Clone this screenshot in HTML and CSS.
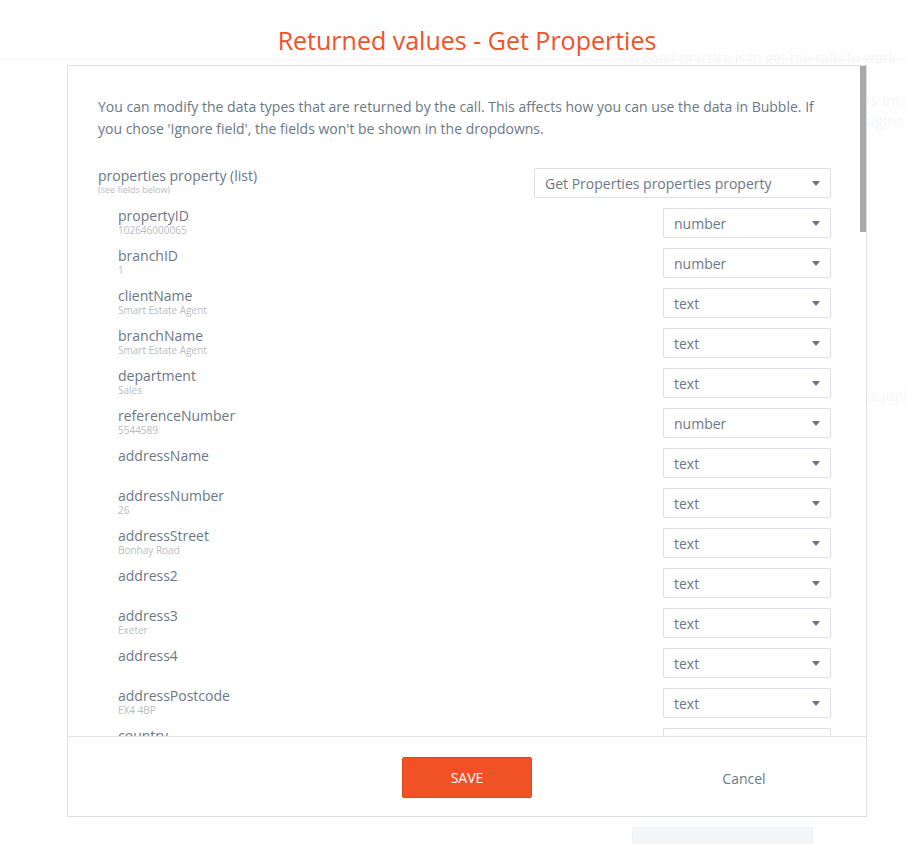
FILE: index.html
```html
<!DOCTYPE html>
<html>
<head>
<meta charset="utf-8">
<link rel="stylesheet" href="styles.css">
</head>
<body>
<div class="backdrop">
  <div class="bg-line bg-line-1"></div>
  <div class="bg-text bg-t1">A good practice is to get the calls to work</div>
  <div class="bg-text bg-t2">ns inte</div>
  <div class="bg-text bg-t3">lugins</div>
  <div class="bg-text bg-t4">es.jupi</div>
  <div class="bg-btn"></div>
</div>

<div class="popup">
  <h1 class="title">Returned values - Get Properties</h1>
  <div class="modal">
    <div class="scroll">
      <p class="intro">You can modify the data types that are returned by the call. This affects how you can use the data in Bubble. If you chose 'Ignore field', the fields won't be shown in the dropdowns.</p>

      <div class="row">
        <div class="lbl"><div class="name">properties property (list)</div><div class="sample small">(see fields below)</div></div>
        <div class="select wide"><span>Get Properties properties property</span><i class="caret"></i></div>
      </div>

      <div class="row child"><div class="lbl"><div class="name">propertyID</div><div class="sample">102646000065</div></div><div class="select"><span>number</span><i class="caret"></i></div></div>
      <div class="row child"><div class="lbl"><div class="name">branchID</div><div class="sample">1</div></div><div class="select"><span>number</span><i class="caret"></i></div></div>
      <div class="row child"><div class="lbl"><div class="name">clientName</div><div class="sample">Smart Estate Agent</div></div><div class="select"><span>text</span><i class="caret"></i></div></div>
      <div class="row child"><div class="lbl"><div class="name">branchName</div><div class="sample">Smart Estate Agent</div></div><div class="select"><span>text</span><i class="caret"></i></div></div>
      <div class="row child"><div class="lbl"><div class="name">department</div><div class="sample">Sales</div></div><div class="select"><span>text</span><i class="caret"></i></div></div>
      <div class="row child"><div class="lbl"><div class="name">referenceNumber</div><div class="sample">5544589</div></div><div class="select"><span>number</span><i class="caret"></i></div></div>
      <div class="row child"><div class="lbl"><div class="name">addressName</div></div><div class="select"><span>text</span><i class="caret"></i></div></div>
      <div class="row child"><div class="lbl"><div class="name">addressNumber</div><div class="sample">26</div></div><div class="select"><span>text</span><i class="caret"></i></div></div>
      <div class="row child"><div class="lbl"><div class="name">addressStreet</div><div class="sample">Bonhay Road</div></div><div class="select"><span>text</span><i class="caret"></i></div></div>
      <div class="row child"><div class="lbl"><div class="name">address2</div></div><div class="select"><span>text</span><i class="caret"></i></div></div>
      <div class="row child"><div class="lbl"><div class="name">address3</div><div class="sample">Exeter</div></div><div class="select"><span>text</span><i class="caret"></i></div></div>
      <div class="row child"><div class="lbl"><div class="name">address4</div></div><div class="select"><span>text</span><i class="caret"></i></div></div>
      <div class="row child"><div class="lbl"><div class="name">addressPostcode</div><div class="sample">EX4 4BP</div></div><div class="select"><span>text</span><i class="caret"></i></div></div>
      <div class="row child"><div class="lbl"><div class="name">country</div></div><div class="select"><span>text</span><i class="caret"></i></div></div>
      <div class="scrollthumb"></div>
    </div>
    <div class="footer">
      <div></div>
      <button class="save">SAVE</button>
      <div class="cancel">Cancel</div>
    </div>
  </div>
</div>
</body>
</html>
```

FILE: styles.css
```css
html, body {
  margin: 0;
  padding: 0;
  background: #ffffff;
  font-family: "Open Sans", "Liberation Sans", sans-serif;
  color: #6b7785;
}
body {
  width: 906px;
  height: 844px;
  overflow: hidden;
  position: relative;
}

/* faded page behind the popup */
.backdrop {
  position: absolute;
  inset: 0;
  background: #fefefe;
}
.bg-line {
  position: absolute;
  left: 0;
  right: 0;
  height: 1px;
  background: #f6f6f6;
}
.bg-line-1 { top: 59px; }
.bg-text {
  position: absolute;
  font-size: 14px;
  color: #f6f7f8;
  white-space: nowrap;
}
.bg-t1 { left: 630px; top: 48px; }
.bg-t2 { left: 862px; top: 90px; font-size: 15px; }
.bg-t3 { left: 862px; top: 110px; font-size: 15px; color: #f3f6fa; }
.bg-t4 { left: 862px; top: 385px; font-size: 15px; }
.bg-btn {
  position: absolute;
  left: 632px;
  top: 827px;
  width: 179px;
  height: 30px;
  background: #f4f5f7;
  border: 1px solid #eef0f2;
  border-radius: 2px;
}

/* popup */
.popup {
  position: absolute;
  left: 67px;
  top: 0;
  width: 800px;
}
.title {
  margin: 0;
  height: 65px;
  padding-top: 23px;
  box-sizing: border-box;
  font-weight: 400;
  font-size: 25px;
  line-height: 34px;
  color: #f0532b;
  text-align: center;
}
.modal {
  background: #ffffff;
  border: 1px solid #dde1e5;
  box-sizing: border-box;
  width: 800px;
  height: 752px;
  display: flex;
  flex-direction: column;
}
.scroll {
  position: relative;
  height: 671px;
  overflow: hidden;
  padding: 30px 35px 0 30px;
  box-sizing: border-box;
  border-bottom: 1px solid #e1e5e9;
}
.scrollthumb {
  position: absolute;
  right: 0;
  top: 0;
  width: 6px;
  height: 166px;
  background: #a9a9a9;
}
.intro {
  margin: 0 0 28px 0;
  font-size: 14px;
  line-height: 22px;
  color: #6b7785;
  max-width: 730px;
}
.row {
  display: flex;
  justify-content: space-between;
  align-items: flex-start;
  height: 40px;
}
.row.child { padding-left: 20px; }
.name {
  font-size: 14px;
  line-height: 16px;
  color: #6b7785;
}
.sample {
  font-size: 10px;
  line-height: 12px;
  color: #b9bcc0;
}
.sample.small { font-size: 9px; line-height: 10px; margin-top: 1px; }
.select {
  box-sizing: border-box;
  width: 168px;
  height: 30px;
  border: 1px solid #dcdfe3;
  border-radius: 2px;
  background: #ffffff;
  display: flex;
  align-items: center;
  justify-content: space-between;
  padding: 0 10px 0 10px;
  font-size: 14px;
  color: #6b7785;
}
.select.wide { width: 297px; }
.caret {
  width: 0;
  height: 0;
  border-left: 4.5px solid transparent;
  border-right: 4.5px solid transparent;
  border-top: 5px solid #6b7785;
}

.footer {
  flex: 1;
  display: grid;
  grid-template-columns: 1fr 1fr 1fr;
  align-items: center;
  justify-items: center;
}
.save {
  width: 130px;
  height: 41px;
  background: #f05226;
  border: 1px solid #d84a22;
  border-radius: 2px;
  color: #ffffff;
  font-family: "Open Sans", "Liberation Sans", sans-serif;
  font-size: 14px;
  padding: 0;
  margin-top: 1px;
}
.cancel {
  font-size: 14px;
  color: #6b7785;
  padding-left: 22px;
  margin-top: 4px;
}
```
